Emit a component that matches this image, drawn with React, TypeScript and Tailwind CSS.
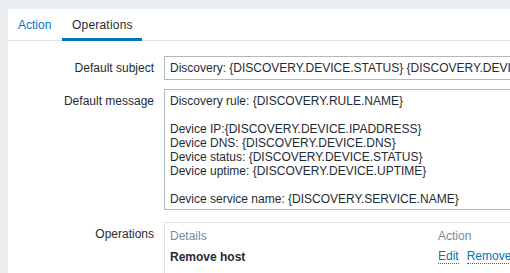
import React from "react";

export default function App() {
  const lines = [
    "Discovery rule: {DISCOVERY.RULE.NAME}",
    "",
    "Device IP:{DISCOVERY.DEVICE.IPADDRESS}",
    "Device DNS: {DISCOVERY.DEVICE.DNS}",
    "Device status: {DISCOVERY.DEVICE.STATUS}",
    "Device uptime: {DISCOVERY.DEVICE.UPTIME}",
    "",
    "Device service name: {DISCOVERY.SERVICE.NAME}",
    "",
    "Device service port: {DISCOVERY.SERVICE.PORT}",
  ];
  return (
    <div className="w-[510px] h-[273px] overflow-hidden bg-[#ebeef0] pt-[9px] pl-[8px] font-['Liberation_Sans',Arial,sans-serif] text-[12px] text-[#1f2c33]">
      <div className="bg-white w-[600px] h-[300px]">
        <div className="flex h-[32px] border-b border-[#dfe4e7]">
          <div className="w-[54px] pl-[10px] h-[31px] flex items-center text-[#0275b8]">Action</div>
          <div className="relative w-[80px] pl-[10px] h-[31px] flex items-center text-[#1f2c33] tracking-[0.2px]">
            Operations
            <span className="absolute left-0 right-0 bottom-[-1px] h-[3px] bg-[#0275b8]" />
          </div>
        </div>

        <div className="pt-[15px]">
          <div className="flex">
            <div className="w-[146px] h-[24px] flex items-center justify-end leading-[14px]">Default subject</div>
            <div className="ml-[10px] w-[420px] h-[24px] border border-[#acbbc2] px-[5px] flex items-center whitespace-nowrap overflow-hidden leading-[14px]">
              Discovery: {"{DISCOVERY.DEVICE.STATUS}"} {"{DISCOVERY.DEVICE.IPADDRESS}"}
            </div>
          </div>

          <div className="flex mt-[9px]">
            <div className="w-[146px] pt-[5px] text-right leading-[14px]">Default message</div>
            <div className="ml-[10px] w-[420px] h-[121px] border border-[#acbbc2] px-[5px] pt-[4px] overflow-hidden leading-[14px] whitespace-pre">
              {lines.map((l, i) => (
                <div key={i} className="h-[14px]">{l}</div>
              ))}
            </div>
          </div>

          <div className="flex mt-[12px]">
            <div className="w-[146px] pt-[5px] text-right leading-[14px]">Operations</div>
            <div className="ml-[10px] w-[420px] h-[60px] border border-[#dfe4e7] px-[5px] pt-[6px] leading-[14px]">
              <div className="flex text-[#768d99]">
                <div className="w-[268px]">Details</div>
                <div>Action</div>
              </div>
              <div className="flex mt-[7px]">
                <div className="w-[268px] font-bold">Remove host</div>
                <div className="flex gap-[8px] text-[#0275b8]">
                  <span className="border-b border-dotted border-[#0275b8] leading-[13px]">Edit</span>
                  <span className="border-b border-dotted border-[#0275b8] leading-[13px]">Remove</span>
                </div>
              </div>
            </div>
          </div>
        </div>
      </div>
    </div>
  );
}
